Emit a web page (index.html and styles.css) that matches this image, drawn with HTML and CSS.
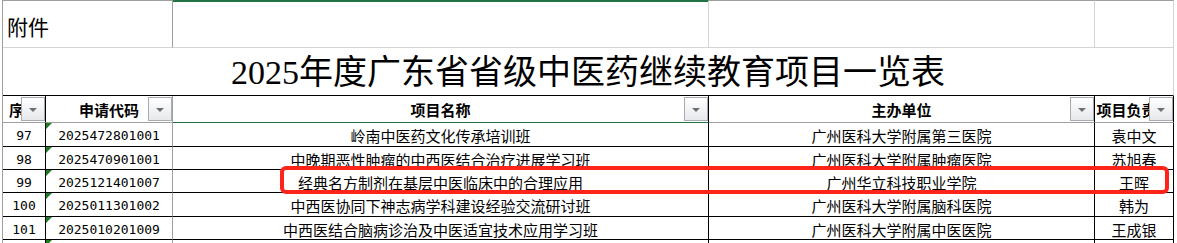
FILE: index.html
```html
<!DOCTYPE html>
<html lang="zh-CN">
<head>
<meta charset="utf-8">
<title>2025年度广东省省级中医药继续教育项目一览表</title>
<link rel="stylesheet" href="styles.css">
</head>
<body>
<div class="page">
  <div class="sheet">
    <div class="c t ab">附件</div>
    <div class="c t cc"></div>
    <div class="c t"></div>
    <div class="c t"></div>

    <div class="c title">2025年度广东省省级中医药继续教育项目一览表</div>

    <div class="c h"><span>序号</span><i class="dd"></i></div>
    <div class="c h b"><span>申请代码</span><i class="dd"></i></div>
    <div class="c h cc"><span>项目名称</span><i class="dd"></i></div>
    <div class="c h"><span>主办单位</span><i class="dd"></i></div>
    <div class="c h"><span>项目负责人</span><i class="dd"></i></div>

    <div class="c d num">97</div>
    <div class="c d b num">2025472801001</div>
    <div class="c d">岭南中医药文化传承培训班</div>
    <div class="c d">广州医科大学附属第三医院</div>
    <div class="c d">袁中文</div>

    <div class="c d num">98</div>
    <div class="c d b num">2025470901001</div>
    <div class="c d">中晚期恶性肿瘤的中西医结合治疗进展学习班</div>
    <div class="c d">广州医科大学附属肿瘤医院</div>
    <div class="c d">苏旭春</div>

    <div class="c d num">99</div>
    <div class="c d b num">2025121401007</div>
    <div class="c d">经典名方制剂在基层中医临床中的合理应用</div>
    <div class="c d">广州华立科技职业学院</div>
    <div class="c d">王晖</div>

    <div class="c d num">100</div>
    <div class="c d b num">2025011301002</div>
    <div class="c d">中西医协同下神志病学科建设经验交流研讨班</div>
    <div class="c d">广州医科大学附属脑科医院</div>
    <div class="c d">韩为</div>

    <div class="c d num">101</div>
    <div class="c d b num">2025010201009</div>
    <div class="c d">中西医结合脑病诊治及中医适宜技术应用学习班</div>
    <div class="c d">广州医科大学附属中医医院</div>
    <div class="c d">王成银</div>

    <div class="c d num"></div>
    <div class="c d b num"></div>
    <div class="c d"></div>
    <div class="c d"></div>
    <div class="c d"></div>
  </div>
  <div class="redbox"></div>
</div>
</body>
</html>
```

FILE: styles.css
```css
html, body {
  margin: 0;
  padding: 0;
  background: #ffffff;
  overflow: hidden;
}

.page {
  position: relative;
  width: 1177px;
  height: 243px;
  overflow: hidden;
  color: #000;
  font-family: "Noto Sans CJK SC", "Noto Sans", sans-serif;
}

.sheet {
  margin-left: 2px;
  width: 1172px;
  box-sizing: border-box;
  border-left: 1px solid #9e9e9e;
  display: grid;
  grid-template-columns: 43px 127px 536px 386px 79px;
  grid-template-rows: 48px 48px 27px 24px 23px 23px 24px 23px 23px;
}

.c {
  box-sizing: border-box;
  position: relative;
  border-right: 1px solid #000;
  border-bottom: 1px solid #000;
  display: flex;
  align-items: center;
  justify-content: center;
  white-space: nowrap;
  overflow: hidden;
  line-height: 1;
}

/* top row */
.t {
  border-top: 1px solid #9e9e9e;
  border-right-color: #d4d4d4;
  border-bottom-color: #d4d4d4;
}
.t.ab {
  grid-column: span 2;
  border-right-color: #9e9e9e;
  justify-content: flex-start;
  padding: 4px 0 0 4px;
  font-size: 21px;
}
.t.cc {
  border-top-color: #217346;
  box-shadow: inset 0 1px 0 #217346;
}

/* title row */
.title {
  grid-column: 1 / -1;
  border-right-color: #d4d4d4;
  font-family: "Liberation Serif", "Noto Sans CJK SC", serif;
  font-size: 34px;
  padding-top: 3px;
}

/* header */
.h {
  font-size: 15px;
  font-weight: 700;
  border-bottom-color: #a0a0a0;
}
.h.b { border-right-color: #a0a0a0; }
.h.cc { border-bottom-color: #217346; }

.dd {
  position: absolute;
  right: 0;
  top: 1px;
  width: 24px;
  height: 24px;
  box-sizing: border-box;
  border: 1px solid #a9adb3;
  background: linear-gradient(#ffffff, #e6e8eb);
}
.dd::after {
  content: "";
  position: absolute;
  left: 7px;
  top: 10px;
  border-left: 4px solid transparent;
  border-right: 4px solid transparent;
  border-top: 4px solid #707070;
}

/* data */
.d {
  font-size: 15px;
  padding-top: 2px;
}
.d.b { border-right-color: #a0a0a0; }
.d.b.num::before {
  content: "";
  position: absolute;
  left: 0;
  top: 0;
  border-top: 6px solid #1e7b1e;
  border-right: 6px solid transparent;
}
.num {
  font-family: "DejaVu Sans Mono", monospace;
  font-size: 13px;
}

.redbox {
  position: absolute;
  left: 280px;
  top: 166px;
  width: 889px;
  height: 28px;
  box-sizing: border-box;
  border: 4px solid #ff2419;
  border-radius: 6px;
}
```
